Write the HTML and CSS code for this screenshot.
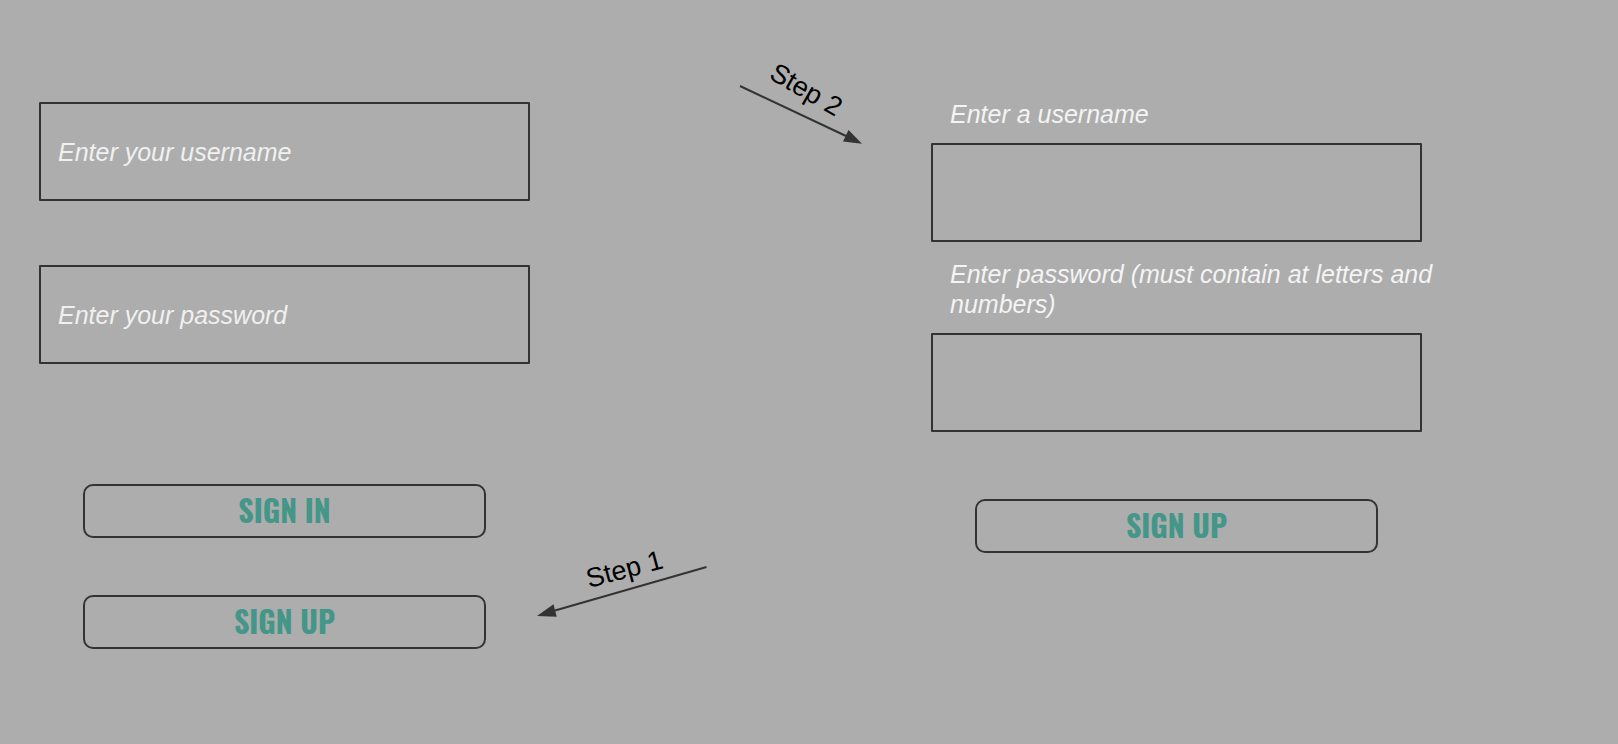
FILE: index.html
```html
<!DOCTYPE html>
<html lang="en">
<head>
<meta charset="utf-8">
<meta name="viewport" content="width=device-width, initial-scale=1">
<title>Sign in and sign up</title>
<link rel="stylesheet" href="styles.css">
</head>
<body>
<main class="board">
  <form class="form sign-in">
    <input class="field" type="text" placeholder="Enter your username" aria-label="Enter your username">
    <input class="field" type="password" placeholder="Enter your password" aria-label="Enter your password">
    <div class="actions">
      <button class="button" type="button">SIGN IN</button>
      <button class="button" type="button">SIGN UP</button>
    </div>
  </form>

  <svg class="flow" viewBox="530 0 401 744" role="group" aria-label="Steps">
    <g class="arrow">
      <path class="shaft" d="M740 86 L846 136"/>
      <path class="head" d="M862 143.700 L848.500 130 L843 141.500 Z"/>
      <path class="shaft" d="M706.500 567 L555 610.500"/>
      <path class="head" d="M537 616 L553.500 604.300 L556.700 616.700 Z"/>
    </g>
    <text class="step" transform="translate(768 78) rotate(30)">Step 2</text>
    <text class="step" transform="translate(589 588) rotate(-15)">Step 1</text>
  </svg>

  <form class="form sign-up">
    <label class="label" for="new-username">Enter a username</label>
    <input class="field" id="new-username" type="text">
    <label class="label" for="new-password">Enter password (must contain at letters and numbers)</label>
    <input class="field" id="new-password" type="password">
    <div class="actions">
      <button class="button" type="button">SIGN UP</button>
    </div>
  </form>
</main>
</body>
</html>
```
FILE: styles.css
```css
* {
  box-sizing: border-box;
}

body {
  margin: 0;
  background: #adadad;
  font-family: "Liberation Sans", Arial, sans-serif;
}

.board {
  display: grid;
  grid-template-columns: 491fr 401fr 491fr 196fr;
  align-items: start;
  padding-left: 39px;
}

.form {
  display: flex;
  flex-direction: column;
}

.sign-in {
  gap: 64px;
  padding-top: 102px;
}

.sign-up {
  gap: 14px;
  padding-top: 96px;
}

.field {
  width: 100%;
  height: 99px;
  padding: 2px 17px 0;
  border: 2px solid #333;
  border-radius: 1px;
  background: transparent;
  color: #f0f0f0;
  font: italic 25px/30px "Liberation Sans", Arial, sans-serif;
}

.field::placeholder {
  color: #f0f0f0;
  opacity: 1;
}

.label {
  margin-right: -20px;
  padding: 3px 0 0 19px;
  color: #f4f4f4;
  font-size: 25px;
  font-style: italic;
  line-height: 30px;
}

.actions {
  display: flex;
  flex-direction: column;
  gap: 57px;
  padding: 0 44px;
}

.sign-in .actions {
  padding-top: 56px;
}

.sign-up .actions {
  padding-top: 53px;
}

.button {
  height: 54px;
  padding: 0 0 2px;
  border: 2px solid #333;
  border-radius: 10px;
  background: transparent;
  color: #439688;
  font: bold 30px/40px Oswald, "Liberation Sans Narrow", "Roboto Condensed", "Liberation Sans", sans-serif;
}

.flow {
  display: block;
  width: 100%;
}

.shaft {
  fill: none;
  stroke: #333;
  stroke-width: 2;
}

.head {
  fill: #333;
}

.step {
  fill: #000;
  font-size: 27px;
}
```
